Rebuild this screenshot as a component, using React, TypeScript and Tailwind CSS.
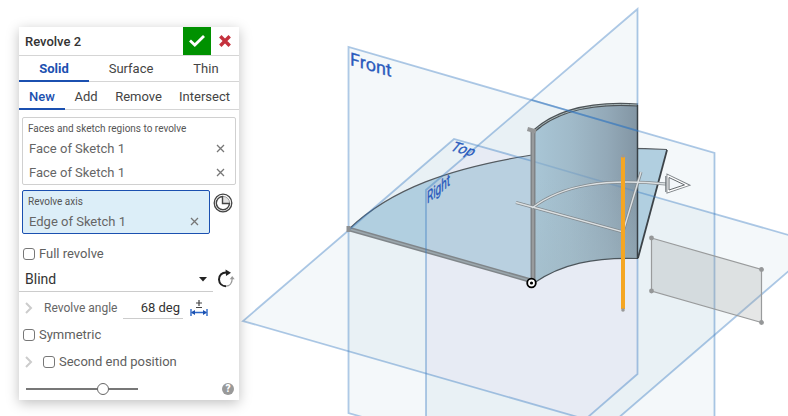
import { useState } from 'react';
import { clsx } from 'clsx';

const bodyTypes = [
  { label: 'Solid', width: 'w-[70px]' },
  { label: 'Surface', width: 'w-[84px]' },
  { label: 'Thin', width: 'flex-1' },
];

const operations = [
  { label: 'New', width: 'w-[46px]' },
  { label: 'Add', width: 'w-[42px]' },
  { label: 'Remove', width: 'w-[63px]' },
  { label: 'Intersect', width: 'flex-1' },
];

function Viewport() {
  return (
    <svg className="absolute inset-0 h-full w-full" viewBox="0 0 788 416" preserveAspectRatio="xMinYMin slice" role="img" aria-label="Revolve preview">
      <defs>
        <linearGradient id="wall" gradientUnits="userSpaceOnUse" x1="536" y1="0" x2="638" y2="0">
          <stop offset="0" stopColor="#a8c5d5" />
          <stop offset="0.35" stopColor="#a0bac9" />
          <stop offset="0.7" stopColor="#93a9b8" />
          <stop offset="1" stopColor="#8295a3" />
        </linearGradient>
        <linearGradient id="wallLow" x1="0" y1="0" x2="0" y2="1">
          <stop offset="0.4" stopColor="#a2bac5" stopOpacity="0" />
          <stop offset="1" stopColor="#a2bac5" stopOpacity="0.5" />
        </linearGradient>
      </defs>

      {/* Plane fills, darker where they overlap */}
      <g fill="#4a83b0" fillOpacity="0.06">
        <path d="M349 47 715 153V519L349 413Z" />
        <path d="M638 9V374L426 556V190Z" />
        <path d="M454 139 820 244 609 426 243 321Z" />
      </g>
      <path d="M426 190 478 146 638 192V374L585 419 426 373Z" fill="#e7ebf4" />

      {/* Sketch faces */}
      <path d="M349 229C391 189 450 168 532 155C575 148 615 147 667 149.500L638 258C594 257 561 264 534 283Z" fill="#b1cfe0" />
      <path d="M426 190 440 178C470 167 502 160 532 155V282L426 252Z" fill="#b9d0e0" />
      <path d="M349 229C391 189 450 168 532 155C575 148 615 147 667 149.500" fill="none" stroke="#555b60" strokeWidth="1.200" />
      <path d="M667 150 638 258" stroke="#3c4348" strokeWidth="1.800" />
      <path d="M349 229 532 281" stroke="#80868a" strokeWidth="4.500" />
      <path d="M349 229 532 281" stroke="#9ba7ad" strokeWidth="1.500" />

      {/* Cylinder wall */}
      <path d="M534 131C556 111 592 102 638 105V258C594 257 561 264 534 283Z" fill="url(#wall)" />
      <path d="M534 131C556 111 592 102 638 105V258C594 257 561 264 534 283Z" fill="url(#wallLow)" />
      <path d="M534 131C556 111 592 102 638 105" fill="none" stroke="#4c5357" strokeWidth="3.200" />
      <path d="M534 131C556 111 592 102 638 105" fill="none" stroke="#a5b3b5" strokeWidth="1" />
      <path d="M534 283C561 264 594 257 638 258.500" fill="none" stroke="#4c555b" strokeWidth="1.200" />
      <path d="M637.500 105V259" stroke="#384046" strokeWidth="1.500" />

      {/* Plane outlines */}
      <g fill="none" stroke="#3577c0" strokeOpacity="0.4" strokeWidth="1.800">
        <path d="M400 428 348.500 413V47L714.500 153V420" />
        <path d="M637.500 105V9L426 190V420M637.500 259V374L580 424" />
        <path d="M349 230 243 321 609 426 820 244 638 192" />
        <path d="M349 230 374 208 454 139 532 161" />
        <path d="M532 161 638 192" strokeOpacity="0.22" />
        <path d="M532 100 638 131" strokeOpacity="0.5" />
      </g>

      <path d="M533 131V282" stroke="#808487" strokeWidth="5" />
      <path d="M533 131V282" stroke="#989b9d" strokeWidth="2" />
      <path d="M527.500 129 536 131.500" stroke="#959798" strokeWidth="4" />
      <rect x="346.500" y="226" width="4" height="6" fill="#8d9092" />

      {/* Direction manipulator */}
      <g fill="none" stroke="#838b90" strokeWidth="3">
        <path d="M516 202.500 623 232 641 172" />
        <path d="M532 208C562 185 605 178 666 184" />
      </g>
      <g fill="none" stroke="#dce0e2" strokeWidth="1.400">
        <path d="M516 202.500 623 232 641 172" />
        <path d="M532 208C562 185 605 178 666 184" />
      </g>
      <path d="M668.500 176.500 686 185 668.500 191Z" fill="none" stroke="#7b8185" strokeWidth="4" />
      <path d="M668.500 176.500 686 185 668.500 191Z" fill="#f4f8fb" stroke="#fff" strokeWidth="2.200" />
      <path d="M669 177.500 684.500 184.900 669 190Z" fill="#f4f8fb" stroke="#666c70" strokeWidth="1" />
      <path d="M665.800 176V192" stroke="#666c70" strokeWidth="1" />

      {/* Axis of revolution */}
      <path d="M623 157V309" stroke="#f5a623" strokeWidth="4" />
      <circle cx="623" cy="156" r="1.800" fill="#999" />
      <circle cx="623" cy="310" r="1.800" fill="#999" />

      {/* Rectangle sketch */}
      <path d="M651.500 238 761.500 269.500V322.500L651.500 291Z" fill="#9b9f9f" fillOpacity="0.26" stroke="#999b9c" strokeWidth="1.200" />
      <g fill="#959798">
        <circle cx="651.500" cy="238" r="2.400" />
        <circle cx="761.500" cy="269.500" r="2.400" />
        <circle cx="761.500" cy="322.500" r="2.400" />
        <circle cx="651.500" cy="291" r="2.400" />
      </g>

      {/* Origin */}
      <circle cx="531.500" cy="283" r="4.300" fill="#fff" stroke="#000" strokeWidth="1.800" />
      <circle cx="531.500" cy="283" r="1.600" fill="#000" />

      {/* Plane names, lying in their planes */}
      <g fill="#2a5bbd" stroke="#2a5bbd" strokeWidth="0.300" fontFamily="Roboto, sans-serif">
        <text fontSize="18" transform="translate(350 65) skewY(16)">Front</text>
        <text fontSize="14" transform="translate(449 150) rotate(16) skewX(-24)">Top</text>
        <text fontSize="13" transform="translate(427 204) rotate(-40) skewX(-40)">Right</text>
      </g>
    </svg>
  );
}

function RemoveButton({ label }: { label: string }) {
  return (
    <button aria-label={label} className="flex h-4 w-4 items-center justify-center text-[#777]">
      <svg width="9" height="9" viewBox="0 0 9 9" stroke="currentColor" strokeWidth="1.300">
        <path d="M1 1 8 8M8 1 1 8" />
      </svg>
    </button>
  );
}

function Expander({ label }: { label: string }) {
  return (
    <button aria-label={label} className="flex h-4 w-3 items-center text-[#ccc]">
      <svg width="8" height="12" viewBox="0 0 8 12" fill="none" stroke="currentColor" strokeWidth="2">
        <path d="M1 1 6 6 1 11" />
      </svg>
    </button>
  );
}

function Checkbox({ label }: { label: string }) {
  return (
    <label className="flex items-center gap-1 text-[#606060]">
      <input type="checkbox" className="h-3 w-3 appearance-none rounded-[3px] border border-[#777] bg-white checked:bg-[#1b50b0]" />
      {label}
    </label>
  );
}

function RevolveDialog() {
  const [bodyType, setBodyType] = useState('Solid');
  const [operation, setOperation] = useState('New');

  return (
    <section className="relative w-[220px] bg-white shadow-[0_3px_12px_rgba(0,0,0,0.25)]">
      <header className="flex h-7 items-center pl-[6px]">
        <h1 className="flex-1 pt-px font-medium text-[#333]">Revolve 2</h1>
        <button aria-label="Accept" className="flex h-7 w-7 items-center justify-center bg-[#009100]">
          <svg width="16" height="12" viewBox="0 0 16 12" fill="none" stroke="#fff" strokeWidth="2.800">
            <path d="M1 5.500 5.800 10 15 1" />
          </svg>
        </button>
        <button aria-label="Cancel" className="flex h-7 w-7 items-center justify-center">
          <svg width="12" height="12" viewBox="0 0 12 12" stroke="#c4313d" strokeWidth="3.400">
            <path d="M1.300 1.300 10.700 10.700M10.700 1.300 1.300 10.700" />
          </svg>
        </button>
      </header>

      <nav className="flex h-[27px] border-y border-[#d5d5d5]">
        {bodyTypes.map((type) => (
          <button
            key={type.label}
            onClick={() => setBodyType(type.label)}
            className={clsx('h-[26px] border-b-2 pt-px', type.width, bodyType === type.label ? 'border-[#1b50b0] font-bold text-[#1b50b0]' : 'border-transparent text-[#444]')}
          >
            {type.label}
          </button>
        ))}
      </nav>

      <nav className="flex h-7 border-b border-[#d5d5d5]">
        {operations.map((op) => (
          <button
            key={op.label}
            onClick={() => setOperation(op.label)}
            className={clsx('h-7 border-b-2 pt-[3px]', op.width, operation === op.label ? 'border-[#1b50b0] font-medium text-[#1b50b0]' : 'border-transparent text-[#444]')}
          >
            {op.label}
          </button>
        ))}
      </nav>

      <div className="px-[3px] pt-[7px]">
        <div className="h-[68px] rounded-[2px] border border-[#d0d0d0] px-[5px] pt-1">
          <h2 className="text-[10px] leading-[14px] text-[#555]">Faces and sketch regions to revolve</h2>
          {['first', 'second'].map((face) => (
            <div key={face} className="flex h-6 items-center justify-between pt-px pr-[2px] pl-px text-[#666]">
              Face of Sketch 1
              <RemoveButton label={`Remove ${face} face`} />
            </div>
          ))}
        </div>

        <div className="mt-[5px] flex items-start gap-[3px]">
          <div className="h-11 flex-1 rounded-[2px] border border-[#1b50b0] bg-[#dceef8] px-[5px] pt-1">
            <h2 className="text-[10px] leading-[14px] text-[#555]">Revolve axis</h2>
            <div className="flex h-6 items-center justify-between pt-px pr-[2px] pl-px text-[#666]">
              Edge of Sketch 1
              <RemoveButton label="Remove axis" />
            </div>
          </div>
          <button aria-label="Select mate connector" className="mt-[3px] mr-[3px] h-5 w-5">
            <svg width="20" height="20" viewBox="0 0 20 20" fill="none" stroke="#444">
              <circle cx="10" cy="10" r="8.800" strokeWidth="1.300" />
              <path d="M9.500 3.500A6.500 6.500 0 0 1 16.500 10.500H9.500Z" fill="#e2e2e2" stroke="none" />
              <circle cx="10" cy="10" r="6.600" stroke="#888" strokeWidth="0.800" />
              <path d="M9.500 3.500A6.600 6.600 0 1 0 16.500 10.500H9.500Z" strokeWidth="1.400" />
            </svg>
          </button>
        </div>
      </div>

      <div className="flex h-8 items-center px-1 pt-[7px]">
        <Checkbox label="Full revolve" />
      </div>

      <div className="flex h-[26px]">
        <div className="relative w-[194px] border-b border-[#ccc]">
          <select aria-label="End type" className="h-[26px] w-full appearance-none bg-transparent pl-[6px] text-[14px] text-[#333]">
            <option>Blind</option>
            <option>Up to next</option>
            <option>Up to face</option>
          </select>
          <svg className="pointer-events-none absolute top-[11px] right-[6px]" width="8" height="5" viewBox="0 0 8 5" fill="#222">
            <path d="M0 0H8L4 4.500Z" />
          </svg>
        </div>
        <button aria-label="Opposite direction" className="mt-[3px] ml-1 h-5 w-5">
          <svg width="18" height="20" viewBox="0 0 18 20" fill="none">
            <path d="M10 3.500C5 3 1.900 6.500 2 10.500C2.200 14.500 5 17.200 9 17.200" stroke="#222" strokeWidth="2" />
            <path d="M8.500 0.500 14 3.800 9 7Z" fill="#222" />
            <path d="M9 17.200C12.500 17 15.200 14 15.200 9.500" stroke="#999" strokeWidth="1.300" />
            <path d="M12.700 10.200 15.200 7 17.700 10.200Z" fill="#999" />
          </svg>
        </button>
      </div>

      <div className="flex h-[31px] items-center pl-[6px]">
        <Expander label="Expand revolve angle" />
        <label htmlFor="angle" className="ml-[7px] w-[79px] text-[12px] text-[#666]">Revolve angle</label>
        <input id="angle" defaultValue="68 deg" className="h-[22px] w-[60px] border-b border-[#ccc] pr-[3px] text-right text-[#333] outline-none" />
        <button aria-label="Set tolerance" className="ml-[7px]">
          <svg width="18" height="18" viewBox="0 0 18 18" fill="none">
            <path d="M6 4H12M9 1V7M6 8.500H12" stroke="#444" strokeWidth="1.200" />
            <path d="M1 10V17M17 10V17M2 13.500H16" stroke="#2c68c8" strokeWidth="1.400" />
            <path d="M1 13.500 5 11V16ZM17 13.500 13 11V16Z" fill="#1b50b0" />
          </svg>
        </button>
      </div>

      <div className="flex h-6 items-center px-1">
        <Checkbox label="Symmetric" />
      </div>

      <div className="flex h-[30px] items-center gap-[6px] pl-[6px]">
        <Expander label="Expand second end position" />
        <Checkbox label="Second end position" />
      </div>

      <footer className="flex h-[23px] items-center justify-between pr-[5px] pl-[7px]">
        <input
          type="range"
          aria-label="Preview opacity"
          defaultValue="71"
          className="h-3 w-28 appearance-none bg-transparent [&::-webkit-slider-runnable-track]:h-[2px] [&::-webkit-slider-runnable-track]:bg-[#777] [&::-webkit-slider-thumb]:-mt-[5px] [&::-webkit-slider-thumb]:h-3 [&::-webkit-slider-thumb]:w-3 [&::-webkit-slider-thumb]:appearance-none [&::-webkit-slider-thumb]:rounded-full [&::-webkit-slider-thumb]:border [&::-webkit-slider-thumb]:border-[#666] [&::-webkit-slider-thumb]:bg-white"
        />
        <button aria-label="Help" className="flex h-3 w-3 items-center justify-center rounded-full bg-[#999] text-[10px] leading-3 font-black text-white">?</button>
      </footer>
    </section>
  );
}

export default function App() {
  return (
    <main className="relative min-h-screen overflow-hidden bg-white pt-[27px] pl-[19px] font-['Roboto',sans-serif] text-[13px] leading-4">
      <Viewport />
      <RevolveDialog />
    </main>
  );
}
